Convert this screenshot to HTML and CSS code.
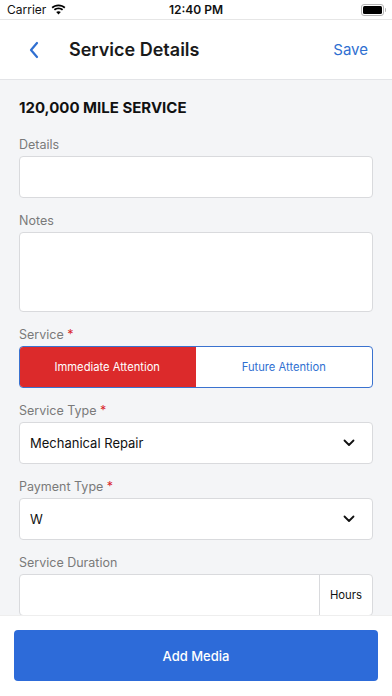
FILE: index.html
```html
<!DOCTYPE html>
<html lang="en">
<head>
  <meta charset="UTF-8">
  <meta name="viewport" content="width=device-width, initial-scale=1.0">
  <title>Service Details</title>
  <link rel="stylesheet" href="styles.css">
</head>
<body>
  <div class="app">
    <!-- Status bar -->
    <div class="status-bar">
      <div class="status-left">
        <span>Carrier</span>
        <svg class="wifi" width="15" height="11" viewBox="0 0 15 11">
          <path d="M7.5 2.2c2.2 0 4.2.8 5.7 2.2l1.2-1.3C12.6 1.4 10.2.4 7.5.4S2.4 1.4.6 3.1l1.2 1.3C3.3 3 5.3 2.2 7.5 2.2z" fill="#000"/>
          <path d="M7.5 5.2c1.3 0 2.5.5 3.5 1.3l1.2-1.3C11 4.1 9.3 3.4 7.5 3.4S4 4.1 2.8 5.2L4 6.5c1-.8 2.2-1.3 3.5-1.3z" fill="#000"/>
          <path d="M7.5 10.6l2.3-2.5c-.6-.5-1.4-.8-2.3-.8s-1.7.3-2.3.8z" fill="#000"/>
        </svg>
      </div>
      <div class="status-time">12:40 PM</div>
      <div class="status-right">
        <div class="battery"><div class="battery-level"></div></div>
        <div class="battery-cap"></div>
      </div>
    </div>

    <!-- Navigation -->
    <header class="nav-bar">
      <svg class="back" width="12" height="18" viewBox="0 0 12 18">
        <path d="M9 2L3 9l6 7" fill="none" stroke="#2f6fd1" stroke-width="2.2" stroke-linecap="round" stroke-linejoin="round"/>
      </svg>
      <h1 class="nav-title">Service Details</h1>
      <span class="nav-save">Save</span>
    </header>

    <!-- Form -->
    <main class="content">
      <h2 class="section-title">120,000 MILE SERVICE</h2>

      <div class="field">
        <label class="field-label">Details</label>
        <div class="input"></div>
      </div>

      <div class="field">
        <label class="field-label">Notes</label>
        <div class="input textarea"></div>
      </div>

      <div class="field">
        <label class="field-label">Service <span class="req">*</span></label>
        <div class="segmented">
          <div class="seg seg-active">Immediate Attention</div>
          <div class="seg">Future Attention</div>
        </div>
      </div>

      <div class="field">
        <label class="field-label">Service Type <span class="req">*</span></label>
        <div class="input select">
          <span>Mechanical Repair</span>
          <svg width="12" height="8" viewBox="0 0 12 8"><path d="M1.5 1.5L6 6l4.5-4.5" fill="none" stroke="#111" stroke-width="1.8" stroke-linecap="round" stroke-linejoin="round"/></svg>
        </div>
      </div>

      <div class="field">
        <label class="field-label">Payment Type <span class="req">*</span></label>
        <div class="input select">
          <span>W</span>
          <svg width="12" height="8" viewBox="0 0 12 8"><path d="M1.5 1.5L6 6l4.5-4.5" fill="none" stroke="#111" stroke-width="1.8" stroke-linecap="round" stroke-linejoin="round"/></svg>
        </div>
      </div>

      <div class="field">
        <label class="field-label">Service Duration</label>
        <div class="input-group">
          <div class="group-input"></div>
          <div class="group-addon">Hours</div>
        </div>
      </div>
    </main>

    <!-- Footer -->
    <footer class="footer">
      <button class="btn-primary">Add Media</button>
    </footer>
  </div>
</body>
</html>
```

FILE: styles.css
```css
/* General body styling */
body {
  margin: 0;
  padding: 0;
  font-family: Inter, "Liberation Sans", Arial, sans-serif;
  color: #111111;
}

.app {
  width: 392px;
  height: 696px;
  display: flex;
  flex-direction: column;
  background-color: #f4f5f7;
  overflow: hidden;
}

/* Status bar */
.status-bar {
  height: 19px;
  border-bottom: 1px solid #e6e6e6;
  background-color: #ffffff;
  display: flex;
  align-items: center;
  justify-content: space-between;
  padding: 0 6px 0 7px;
  font-size: 12px;
  position: relative;
}

.status-left {
  display: flex;
  align-items: center;
  gap: 5px;
}

.status-time {
  position: absolute;
  left: 0;
  right: 0;
  text-align: center;
  font-weight: 600;
  pointer-events: none;
}

.status-right {
  display: flex;
  align-items: center;
}

.battery {
  width: 19px;
  height: 8px;
  border: 1px solid #b5b5b5;
  border-radius: 3px;
  padding: 1px;
}

.battery-level {
  width: 100%;
  height: 100%;
  background-color: #000000;
  border-radius: 1.5px;
}

.battery-cap {
  width: 1.5px;
  height: 4px;
  background-color: #b5b5b5;
  border-radius: 0 1px 1px 0;
  margin-left: 1px;
}

/* Navigation bar */
.nav-bar {
  height: 59px;
  background-color: #ffffff;
  border-bottom: 1px solid #e3e4e7;
  display: flex;
  align-items: center;
  padding: 0 24px 0 28px;
}

.back {
  margin-right: 29px;
}

.nav-title {
  flex: 1;
  margin: 0;
  font-size: 18px;
  font-weight: 600;
  color: #1a1a1a;
}

.nav-save {
  color: #2f6fd1;
  font-size: 15px;
}

/* Content */
.content {
  flex: 1;
  overflow: hidden;
  padding: 19px 19px 0 19px;
}

.section-title {
  margin: 0 0 18px 0;
  font-size: 15px;
  line-height: 18px;
  font-weight: 700;
  color: #111111;
}

.field {
  margin-bottom: 13px;
}

.field-label {
  display: block;
  font-size: 12.5px;
  line-height: 16px;
  color: #7a7a7a;
  padding-top: 2px;
  margin-bottom: 3px;
}

.req {
  color: #d9262b;
}

.input {
  height: 42px;
  box-sizing: border-box;
  background-color: #ffffff;
  border: 1px solid #d9dadd;
  border-radius: 4px;
}

.textarea {
  height: 80px;
}

.select {
  display: flex;
  align-items: center;
  justify-content: space-between;
  padding: 0 17px 0 10px;
  font-size: 13px;
  color: #111111;
}

/* Segmented control */
.segmented {
  display: flex;
  height: 42px;
  box-sizing: border-box;
  border: 1px solid #3a72cf;
  border-radius: 4px;
  overflow: hidden;
  background-color: #ffffff;
}

.seg {
  flex: 1;
  display: flex;
  align-items: center;
  justify-content: center;
  font-size: 11.2px;
  color: #2f6fd1;
}

.seg-active {
  background-color: #dc2a2b;
  color: #ffffff;
  margin: -1px 0 -1px -1px;
}

/* Input group */
.input-group {
  display: flex;
  height: 42px;
  box-sizing: border-box;
  background-color: #ffffff;
  border: 1px solid #d9dadd;
  border-radius: 4px;
}

.group-input {
  flex: 1;
}

.group-addon {
  width: 52px;
  border-left: 1px solid #d9dadd;
  display: flex;
  align-items: center;
  justify-content: center;
  font-size: 11.3px;
  color: #111111;
}

/* Footer */
.footer {
  height: 81px;
  box-sizing: border-box;
  background-color: #ffffff;
  border-top: 1px solid #eeeeee;
  padding: 14px 14px 15px 14px;
}

.btn-primary {
  width: 100%;
  height: 51px;
  background-color: #2d6bd9;
  color: #ffffff;
  border: none;
  border-radius: 4px;
  font-family: inherit;
  font-size: 13px;
  font-weight: 500;
}
```
